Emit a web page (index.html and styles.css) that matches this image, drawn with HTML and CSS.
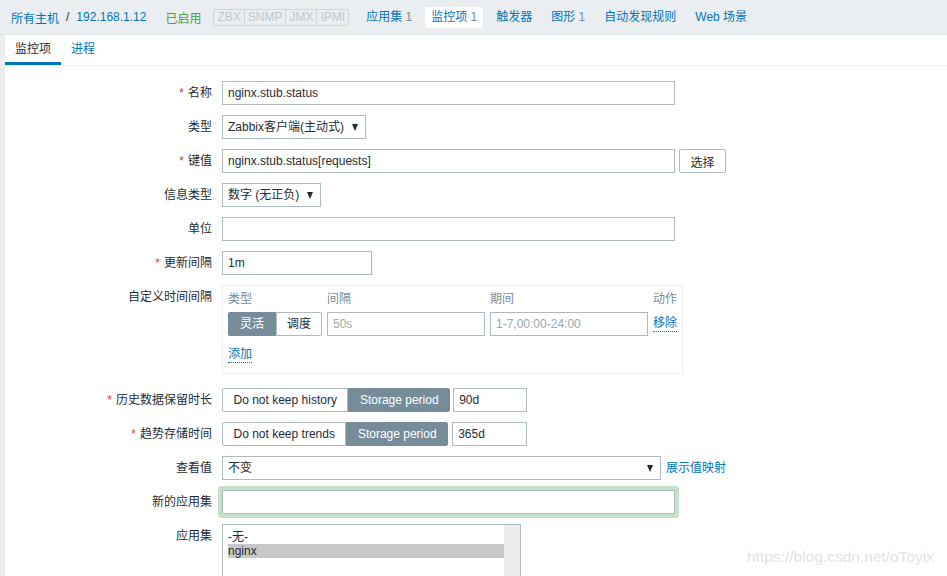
FILE: index.html
```html
<!DOCTYPE html>
<html lang="zh">
<head>
<meta charset="utf-8">
<title>监控项</title>
<link rel="stylesheet" href="styles.css">
</head>
<body>
<div class="topnav">
  <a class="crumb link">所有主机</a>
  <span class="sep">/</span>
  <a class="crumb link">192.168.1.12</a>
  <span class="status-on">已启用</span>
  <div class="avail">
    <span class="av">ZBX</span><span class="av">SNMP</span><span class="av">JMX</span><span class="av">IPMI</span>
  </div>
  <div class="navitems">
    <a class="nav link">应用集 <span class="cnt">1</span></a>
    <a class="nav nav-sel">监控项 <span class="cnt">1</span></a>
    <a class="nav link">触发器</a>
    <a class="nav link">图形 <span class="cnt">1</span></a>
    <a class="nav link">自动发现规则</a>
    <a class="nav link">Web 场景</a>
  </div>
</div>

<div class="content">
  <div class="tabs">
    <span class="tab tab-sel">监控项</span>
    <span class="tab link">进程</span>
  </div>

  <div class="form">
    <div class="row">
      <label class="lbl"><span class="ast">*</span>名称</label>
      <div class="field"><div class="input w453">nginx.stub.status</div></div>
    </div>
    <div class="row">
      <label class="lbl">类型</label>
      <div class="field"><div class="select w144"><span>Zabbix客户端(主动式)</span><span class="arrow"></span></div></div>
    </div>
    <div class="row">
      <label class="lbl"><span class="ast">*</span>键值</label>
      <div class="field"><div class="input w453">nginx.stub.status[requests]</div><button class="btn">选择</button></div>
    </div>
    <div class="row">
      <label class="lbl">信息类型</label>
      <div class="field"><div class="select w99"><span>数字 (无正负)</span><span class="arrow"></span></div></div>
    </div>
    <div class="row">
      <label class="lbl">单位</label>
      <div class="field"><div class="input w453"></div></div>
    </div>
    <div class="row">
      <label class="lbl"><span class="ast">*</span>更新间隔</label>
      <div class="field"><div class="input w150">1m</div></div>
    </div>
    <div class="row row-custom">
      <label class="lbl">自定义时间间隔</label>
      <div class="field">
        <div class="custom">
          <div class="cgrid">
            <span class="chead">类型</span>
            <span class="chead">间隔</span>
            <span class="chead">期间</span>
            <span class="chead">动作</span>
            <div class="seg seg-small"><span class="seg-on">灵活</span><span class="seg-off">调度</span></div>
            <div class="input ph">50s</div>
            <div class="input ph">1-7,00:00-24:00</div>
            <span class="dlink">移除</span>
          </div>
          <div class="addrow"><span class="dlink">添加</span></div>
        </div>
      </div>
    </div>
    <div class="row">
      <label class="lbl"><span class="ast">*</span>历史数据保留时长</label>
      <div class="field">
        <div class="seg"><span class="seg-off">Do not keep history</span><span class="seg-on">Storage period</span></div>
        <div class="input w74 ml3">90d</div>
      </div>
    </div>
    <div class="row">
      <label class="lbl"><span class="ast">*</span>趋势存储时间</label>
      <div class="field">
        <div class="seg"><span class="seg-off">Do not keep trends</span><span class="seg-on">Storage period</span></div>
        <div class="input w75 ml4">365d</div>
      </div>
    </div>
    <div class="row">
      <label class="lbl">查看值</label>
      <div class="field"><div class="select w439"><span>不变</span><span class="arrow"></span></div><a class="link maplink">展示值映射</a></div>
    </div>
    <div class="row">
      <label class="lbl">新的应用集</label>
      <div class="field"><div class="input w453 glow"></div></div>
    </div>
    <div class="row">
      <label class="lbl">应用集</label>
      <div class="field">
        <div class="listbox">
          <div class="opts">
            <div class="opt">-无-</div>
            <div class="opt opt-sel">nginx</div>
          </div>
          <div class="scroll"></div>
        </div>
      </div>
    </div>
  </div>
</div>
<div class="watermark">https://blog.csdn.net/oToyix</div>
</body>
</html>
```

FILE: styles.css
```css
* { box-sizing: border-box; }
html, body { margin: 0; padding: 0; }
body {
  background: #ebeef0;
  font-family: "Liberation Sans", Arial, "Noto Sans CJK SC", sans-serif;
  font-size: 12px;
  color: #1f2c33;
  width: 947px;
  height: 576px;
  overflow: hidden;
  position: relative;
}
.link { color: #0275b8; text-decoration: none; }

.topnav {
  height: 35px;
  display: flex;
  align-items: center;
  padding-left: 11px;
  border-bottom: 1px solid #dfe4e7;
}
.sep { color: #1f2c33; margin: 0 7px 0 7px; }
.status-on { color: #429e47; margin-left: 19px; }
.avail {
  display: flex;
  margin-left: 12px;
  border: 1px solid #cfd6da;
  border-radius: 2px;
  height: 17px;
}
.av {
  color: #bfc8cd;
  padding: 0 3px;
  line-height: 15px;
  font-size: 12px;
  border-left: 1px solid #cfd6da;
}
.av:first-child { border-left: 0; }
.navitems { display: flex; margin-left: 11px; gap: 7px; }
.nav {
  display: block;
  padding: 0 6px;
  height: 21px;
  line-height: 21px;
  border-radius: 2px;
}
.nav-sel { background: #ffffff; color: #0275b8; }
.cnt { color: #768d99; }

.content {
  margin-left: 5px;
  background: #ffffff;
  height: 541px;
}
.tabs {
  display: flex;
  height: 31px;
  border-bottom: 1px solid #ebeef0;
}
.tab {
  padding: 0 10px;
  line-height: 28px;
  height: 30px;
  border-bottom: 3px solid transparent;
}
.tab-sel { border-bottom-color: #0275b8; color: #1f2c33; }

.form { padding-top: 15px; }
.row {
  display: grid;
  grid-template-columns: 207px 1fr;
  column-gap: 10px;
  margin-bottom: 10px;
}
.row-custom { margin-bottom: 14px; }
.lbl {
  text-align: right;
  line-height: 24px;
  white-space: nowrap;
}
.ast { color: #e33734; margin-right: 4px; }
.field { display: flex; align-items: flex-start; }

.input {
  height: 24px;
  border: 1px solid #acbbc2;
  padding: 0 5px;
  line-height: 22px;
  background: #fff;
  white-space: nowrap;
  overflow: hidden;
}
.ph { color: #9aa7ad; }
.w453 { width: 453px; }
.w150 { width: 150px; }
.w74 { width: 74px; }
.w75 { width: 75px; }
.ml3 { margin-left: 3px; }
.ml4 { margin-left: 4px; }

.select {
  height: 24px;
  border: 1px solid #acbbc2;
  padding: 0 7px 0 5px;
  line-height: 22px;
  display: flex;
  justify-content: space-between;
  align-items: center;
  white-space: nowrap;
}
.w144 { width: 144px; }
.w99 { width: 99px; }
.w439 { width: 439px; }
.arrow {
  width: 0;
  height: 0;
  border-left: 3.5px solid transparent;
  border-right: 3.5px solid transparent;
  border-top: 7px solid #1f2c33;
  margin-left: 8px;
}
.btn {
  margin-left: 4px;
  height: 24px;
  width: 47px;
  border: 1px solid #acbbc2;
  border-radius: 2px;
  background: #fff;
  font-family: inherit;
  font-size: 12px;
  color: #1f2c33;
  padding: 0;
}
.maplink { line-height: 24px; margin-left: 5px; }

.custom {
  width: 461px;
  border: 1px solid #ebeef0;
  padding: 5px 5px 10px 5px;
}
.cgrid {
  display: grid;
  grid-template-columns: 94px 158px 158px auto;
  column-gap: 5px;
  row-gap: 5px;
}
.chead { color: #768d99; line-height: 16px; }
.dlink {
  color: #0275b8;
  border-bottom: 1px dotted #0275b8;
  align-self: center;
  line-height: 15px;
  justify-self: start;
}
.addrow { margin-top: 11px; display: flex; }

.seg { display: flex; height: 24px; }
.seg span {
  line-height: 22px;
  padding: 0 10.5px;
  border: 1px solid #acbbc2;
  white-space: nowrap;
}
.seg span:first-child { border-radius: 2px 0 0 2px; }
.seg span:last-child { border-radius: 0 2px 2px 0; }
.seg-on { background: #768d99; color: #fff; border-color: #768d99 !important; }
.seg-off { background: #fff; color: #1f2c33; }
.seg-small span { padding: 0; width: 48px; text-align: center; }
.seg-small span:last-child { width: 46px; }

.glow { box-shadow: 0 0 0 4px #c5e2c8; border-radius: 1px; }

.listbox {
  width: 299px;
  height: 80px;
  border: 1px solid #acbbc2;
  display: flex;
  justify-content: space-between;
}
.opts { padding: 5px 0 0 5px; flex: 1; }
.opt { line-height: 14px; padding-left: 0; }
.opt-sel { background: #c8c8c8; margin-right: -3px; }
.scroll { width: 16px; background: #ebebeb; }

.watermark {
  position: absolute;
  left: 747px;
  top: 548px;
  font-size: 15.5px;
  color: #e3e3e3;
  white-space: nowrap;
}
```
